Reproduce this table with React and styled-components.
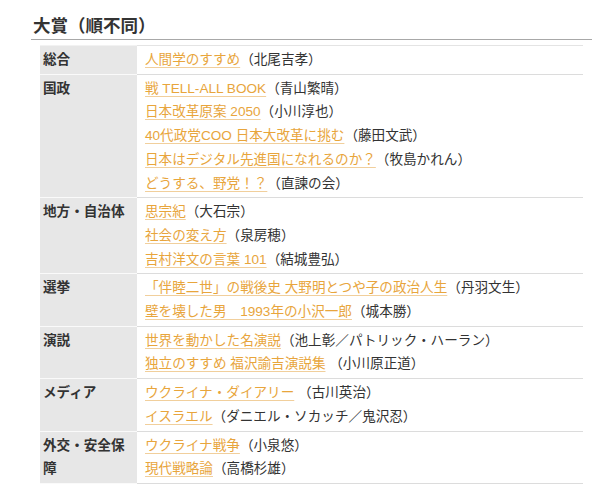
import React from "react";
import styled, { createGlobalStyle } from "styled-components";

const GlobalStyle = createGlobalStyle`
  body {
    margin: 0;
    background: #fff;
    font-family: "Liberation Sans", "Noto Sans CJK JP", sans-serif;
    color: #333;
  }
`;

const Section = styled.section`
  width: 561px;
  margin-left: 31px;
  padding-top: 14px;
`;

const Heading = styled.h2`
  margin: 0;
  padding: 0 0 0 2px;
  font-size: 17.5px;
  line-height: 25px;
  font-weight: 700;
  color: #333;
  border-bottom: 1px solid #a8a8a8;
`;

const AwardTable = styled.table`
  width: 543px;
  margin: 5px 9px 0 9px;
  border-collapse: separate;
  border-spacing: 0;
  font-size: 13.6px;
  line-height: 23.7px;
`;

const Label = styled.th`
  width: 91px;
  padding: 2px 3px;
  text-align: left;
  vertical-align: top;
  font-weight: 700;
  color: #333;
  background: #e7e7e7;
  border-top: ${({ $first }) => ($first ? "1px solid #f2f2f2" : "0")};
  border-bottom: 1px solid #fafafa;
`;

const Cell = styled.td`
  padding: 2px 8px;
  vertical-align: top;
  border-top: ${({ $first }) => ($first ? "1px solid #e4e4e4" : "0")};
  border-bottom: 1px solid #dcdcdc;
`;

const Entry = styled.div`
  white-space: nowrap;
`;

const BookLink = styled.a`
  color: #e8a53c;
  text-decoration: underline;
  text-decoration-color: #f1cf9c;
  text-decoration-thickness: 1px;
  text-underline-offset: 3px;
`;

const Author = styled.span`
  color: #333;
`;

const awards = [
  { label: "総合", books: [["人間学のすすめ", "（北尾吉孝）"]] },
  {
    label: "国政",
    books: [
      ["戦 TELL-ALL BOOK", "（青山繁晴）"],
      ["日本改革原案 2050", "（小川淳也）"],
      ["40代政党COO 日本大改革に挑む", "（藤田文武）"],
      ["日本はデジタル先進国になれるのか？", "（牧島かれん）"],
      ["どうする、野党！？", "（直諫の会）"],
    ],
  },
  {
    label: "地方・自治体",
    books: [
      ["思宗紀", "（大石宗）"],
      ["社会の変え方", "（泉房穂）"],
      ["吉村洋文の言葉 101", "（結城豊弘）"],
    ],
  },
  {
    label: "選挙",
    books: [
      ["「伴睦二世」の戦後史 大野明とつや子の政治人生", "（丹羽文生）"],
      ["壁を壊した男　1993年の小沢一郎", "（城本勝）"],
    ],
  },
  {
    label: "演説",
    books: [
      ["世界を動かした名演説", "（池上彰／パトリック・ハーラン）"],
      ["独立のすすめ 福沢諭吉演説集", " （小川原正道）"],
    ],
  },
  {
    label: "メディア",
    books: [
      ["ウクライナ・ダイアリー", " （古川英治）"],
      ["イスラエル", "（ダニエル・ソカッチ／鬼沢忍）"],
    ],
  },
  {
    label: "外交・安全保障",
    books: [
      ["ウクライナ戦争", "（小泉悠）"],
      ["現代戦略論", "（高橋杉雄）"],
    ],
  },
];

export default function App() {
  return (
    <>
      <GlobalStyle />
      <Section>
        <Heading>大賞（順不同）</Heading>
        <AwardTable>
          <tbody>
            {awards.map((row, i) => (
              <tr key={row.label}>
                <Label $first={i === 0}>{row.label}</Label>
                <Cell $first={i === 0}>
                  {row.books.map(([title, author]) => (
                    <Entry key={title}>
                      <BookLink href="#">{title}</BookLink>
                      <Author>{author}</Author>
                    </Entry>
                  ))}
                </Cell>
              </tr>
            ))}
          </tbody>
        </AwardTable>
      </Section>
    </>
  );
}
